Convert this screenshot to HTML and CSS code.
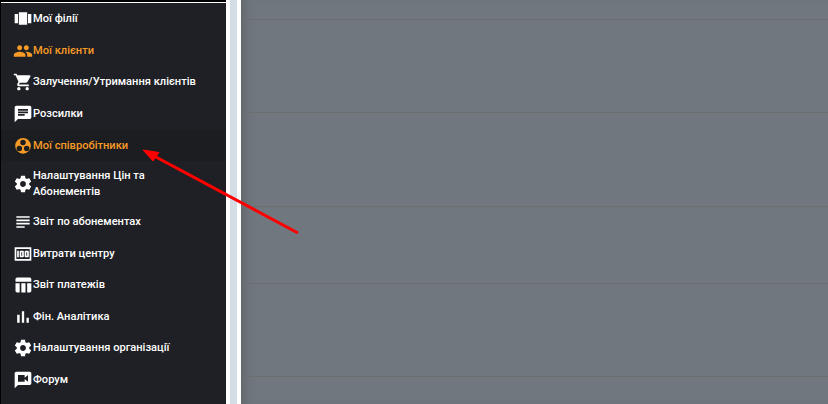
FILE: index.html
```html
<!DOCTYPE html>
<html lang="uk">
<head>
  <meta charset="UTF-8" />
  <title>Мої співробітники</title>
  <link rel="stylesheet" href="styles.css">
</head>
<body>

  <div class="page">
    <div class="sidebar">
      <div class="topline"></div>
      <a class="item">
        <svg viewBox="0 0 24 24"><path d="M7 19h10V4H7v15zm-5-2h4V6H2v11zM18 6v11h4V6h-4z"/></svg>
        <span>Мої філії</span>
      </a>
      <a class="item orange">
        <svg viewBox="0 0 24 24"><path d="M16 11c1.66 0 2.99-1.34 2.99-3S17.66 5 16 5c-1.66 0-3 1.34-3 3s1.34 3 3 3zm-8 0c1.66 0 2.99-1.34 2.99-3S9.66 5 8 5C6.34 5 5 6.34 5 8s1.34 3 3 3zm0 2c-2.33 0-7 1.17-7 3.5V19h14v-2.5c0-2.33-4.67-3.5-7-3.5zm8 0c-.29 0-.62.02-.97.05 1.16.84 1.97 1.97 1.97 3.45V19h6v-2.5c0-2.33-4.67-3.5-7-3.5z"/></svg>
        <span>Мої клієнти</span>
      </a>
      <a class="item">
        <svg viewBox="0 0 24 24"><path d="M7 18c-1.1 0-1.99.9-1.99 2S5.9 22 7 22s2-.9 2-2-.9-2-2-2zM1 2v2h2l3.6 7.59-1.35 2.45c-.16.28-.25.61-.25.96 0 1.1.9 2 2 2h12v-2H7.42c-.14 0-.25-.11-.25-.25l.03-.12.9-1.63h7.45c.75 0 1.41-.41 1.75-1.03l3.58-6.49c.08-.14.12-.31.12-.48 0-.55-.45-1-1-1H5.21l-.94-2H1zm16 16c-1.1 0-1.99.9-1.99 2s.89 2 1.99 2 2-.9 2-2-.9-2-2-2z"/></svg>
        <span>Залучення/Утримання клієнтів</span>
      </a>
      <a class="item">
        <svg viewBox="0 0 24 24"><path d="M20 2H4c-1.1 0-1.99.9-1.99 2L2 22l4-4h14c1.1 0 2-.9 2-2V4c0-1.1-.9-2-2-2zM6 9h12v2H6V9zm8 5H6v-2h8v2zm4-6H6V6h12v2z"/></svg>
        <span>Розсилки</span>
      </a>
      <a class="item orange active">
        <svg viewBox="0 0 24 24"><path fill-rule="evenodd" d="M12 2.4a9.4 9.4 0 1 0 0 18.8 9.4 9.4 0 0 0 0-18.8zM12 4.4a3.3 3.3 0 1 1 0 6.6 3.3 3.3 0 0 1 0-6.6zM7.6 11.6a3.3 3.3 0 1 1 0 6.6 3.3 3.3 0 0 1 0-6.6zM16.4 11.6a3.3 3.3 0 1 1 0 6.6 3.3 3.3 0 0 1 0-6.6z"/></svg>
        <span>Мої співробітники</span>
      </a>
      <a class="item">
        <svg viewBox="0 0 24 24"><path d="M19.43 12.98c.04-.32.07-.64.07-.98s-.03-.66-.07-.98l2.11-1.65c.19-.15.24-.42.12-.64l-2-3.46c-.12-.22-.39-.3-.61-.22l-2.49 1c-.52-.4-1.08-.73-1.69-.98l-.38-2.65C14.46 2.18 14.25 2 14 2h-4c-.25 0-.46.18-.49.42l-.38 2.65c-.61.25-1.17.59-1.69.98l-2.49-1c-.23-.09-.49 0-.61.22l-2 3.46c-.13.22-.07.49.12.64l2.11 1.65c-.04.32-.07.65-.07.98s.03.66.07.98l-2.11 1.65c-.19.15-.24.42-.12.64l2 3.46c.12.22.39.3.61.22l2.49-1c.52.4 1.08.73 1.69.98l.38 2.65c.03.24.24.42.49.42h4c.25 0 .46-.18.49-.42l.38-2.65c.61-.25 1.17-.59 1.69-.98l2.49 1c.23.09.49 0 .61-.22l2-3.46c.12-.22.07-.49-.12-.64l-2.11-1.65zM12 15.5c-1.93 0-3.5-1.57-3.5-3.5s1.57-3.5 3.5-3.5 3.5 1.57 3.5 3.5-1.57 3.5-3.5 3.5z"/></svg>
        <span>Налаштування Цін та Абонементів</span>
      </a>
      <a class="item">
        <svg viewBox="0 0 24 24"><path d="M14 17H4v2h10v-2zm6-8H4v2h16V9zM4 15h16v-2H4v2zM4 5v2h16V5H4z"/></svg>
        <span>Звіт по абонементах</span>
      </a>
      <a class="item">
        <svg viewBox="0 0 24 24"><path d="M5 8h2v8H5zm7 0H9c-.55 0-1 .45-1 1v6c0 .55.45 1 1 1h3c.55 0 1-.45 1-1V9c0-.55-.45-1-1-1zm-1 6h-1v-4h1v4zm7-6h-3c-.55 0-1 .45-1 1v6c0 .55.45 1 1 1h3c.55 0 1-.45 1-1V9c0-.55-.45-1-1-1zm-1 6h-1v-4h1v4zM2 4v16h20V4H2zm2 14V6h16v12H4z"/></svg>
        <span>Витрати центру</span>
      </a>
      <a class="item">
        <svg viewBox="0 0 24 24"><path d="M10 10.02h5V21h-5zM17 21h3c1.1 0 2-.9 2-2v-9h-5v11zm3-18H5c-1.1 0-2 .9-2 2v3h19V5c0-1.1-.9-2-2-2zM3 19c0 1.1.9 2 2 2h3V10H3v9z"/></svg>
        <span>Звіт платежів</span>
      </a>
      <a class="item">
        <svg viewBox="0 0 24 24"><path d="M5 9.2h3V19H5zM10.6 5h2.8v14h-2.8zm5.6 8H19v6h-2.8z"/></svg>
        <span>Фін. Аналітика</span>
      </a>
      <a class="item">
        <svg viewBox="0 0 24 24"><path d="M19.43 12.98c.04-.32.07-.64.07-.98s-.03-.66-.07-.98l2.11-1.65c.19-.15.24-.42.12-.64l-2-3.46c-.12-.22-.39-.3-.61-.22l-2.49 1c-.52-.4-1.08-.73-1.69-.98l-.38-2.65C14.46 2.18 14.25 2 14 2h-4c-.25 0-.46.18-.49.42l-.38 2.65c-.61.25-1.17.59-1.69.98l-2.49-1c-.23-.09-.49 0-.61.22l-2 3.46c-.13.22-.07.49.12.64l2.11 1.65c-.04.32-.07.65-.07.98s.03.66.07.98l-2.11 1.65c-.19.15-.24.42-.12.64l2 3.46c.12.22.39.3.61.22l2.49-1c.52.4 1.08.73 1.69.98l.38 2.65c.03.24.24.42.49.42h4c.25 0 .46-.18.49-.42l.38-2.65c.61-.25 1.17-.59 1.69-.98l2.49 1c.23.09.49 0 .61-.22l2-3.46c.12-.22.07-.49-.12-.64l-2.11-1.65zM12 15.5c-1.93 0-3.5-1.57-3.5-3.5s1.57-3.5 3.5-3.5 3.5 1.57 3.5 3.5-1.57 3.5-3.5 3.5z"/></svg>
        <span>Налаштування організації</span>
      </a>
      <a class="item">
        <svg viewBox="0 0 24 24"><path d="M20 2H4c-1.1 0-1.99.9-1.99 2L2 22l4-4h14c1.1 0 2-.9 2-2V4c0-1.1-.9-2-2-2zm-2 12l-4-3.2V14H6V6h8v3.2L18 6v8z"/></svg>
        <span>Форум</span>
      </a>
    </div>

    <div class="gutter"></div>

    <div class="main">
      <div class="row row-a"></div>
      <div class="row row-b"></div>
      <div class="row row-d"></div>
      <div class="row row-c"></div>
      <div class="row row-b"></div>
    </div>
  </div>

  <!-- red arrow drawn over the screenshot -->
  <svg class="arrow" viewBox="0 0 828 404">
    <line x1="298" y1="233" x2="155" y2="156.5" stroke="#ff0000" stroke-width="3"/>
    <polygon points="143,150 159,152.5 153,161" fill="#ff0000" stroke="#ff0000"/>
  </svg>

</body>
</html>
```

FILE: styles.css
```css
html, body {
  margin: 0;
  height: 100%;
  overflow: hidden;
}
body {
  font-family: Roboto, "Liberation Sans", sans-serif;
  background: #fff;
}
.page {
  display: flex;
  height: 404px;
}
.sidebar {
  width: 225px;
  margin-right: 1px;
  background: #1e2025;
  border-left: 1px solid #000;
  flex-shrink: 0;
}
.topline {
  height: 2px;
  margin-bottom: 0.5px;
  background: #000;
  border-bottom: 1px solid #fff;
}
.item {
  display: flex;
  align-items: center;
  min-height: 31.6px;
  padding: 0 12px;
  color: #fff;
  font-size: 11.1px;
  font-weight: 500;
  line-height: 16px;
}
.item span {
  padding: 6.4px 0;
}
.item svg {
  width: 20px;
  height: 20px;
  fill: currentColor;
  flex-shrink: 0;
}
.orange {
  color: #f79a26;
}
.active {
  background: #1b1d21;
}
.gutter {
  width: 7px;
  margin: 0 4px 0 3px;
  background: #d3dde6;
  flex-shrink: 0;
}
.main {
  flex: 1;
  background: #70777e;
  box-shadow: inset 10px 0 10px -6px #62686c;
}
.row {
  box-sizing: border-box;
  border-bottom: 1px solid #6d6e70;
}
.row-a {
  height: 20px;
}
.row-b {
  height: 93px;
}
.row-c {
  height: 77px;
}
.row-d {
  height: 94px;
}
.arrow {
  position: absolute;
  left: 0;
  top: 0;
  width: 828px;
  height: 404px;
}
```
